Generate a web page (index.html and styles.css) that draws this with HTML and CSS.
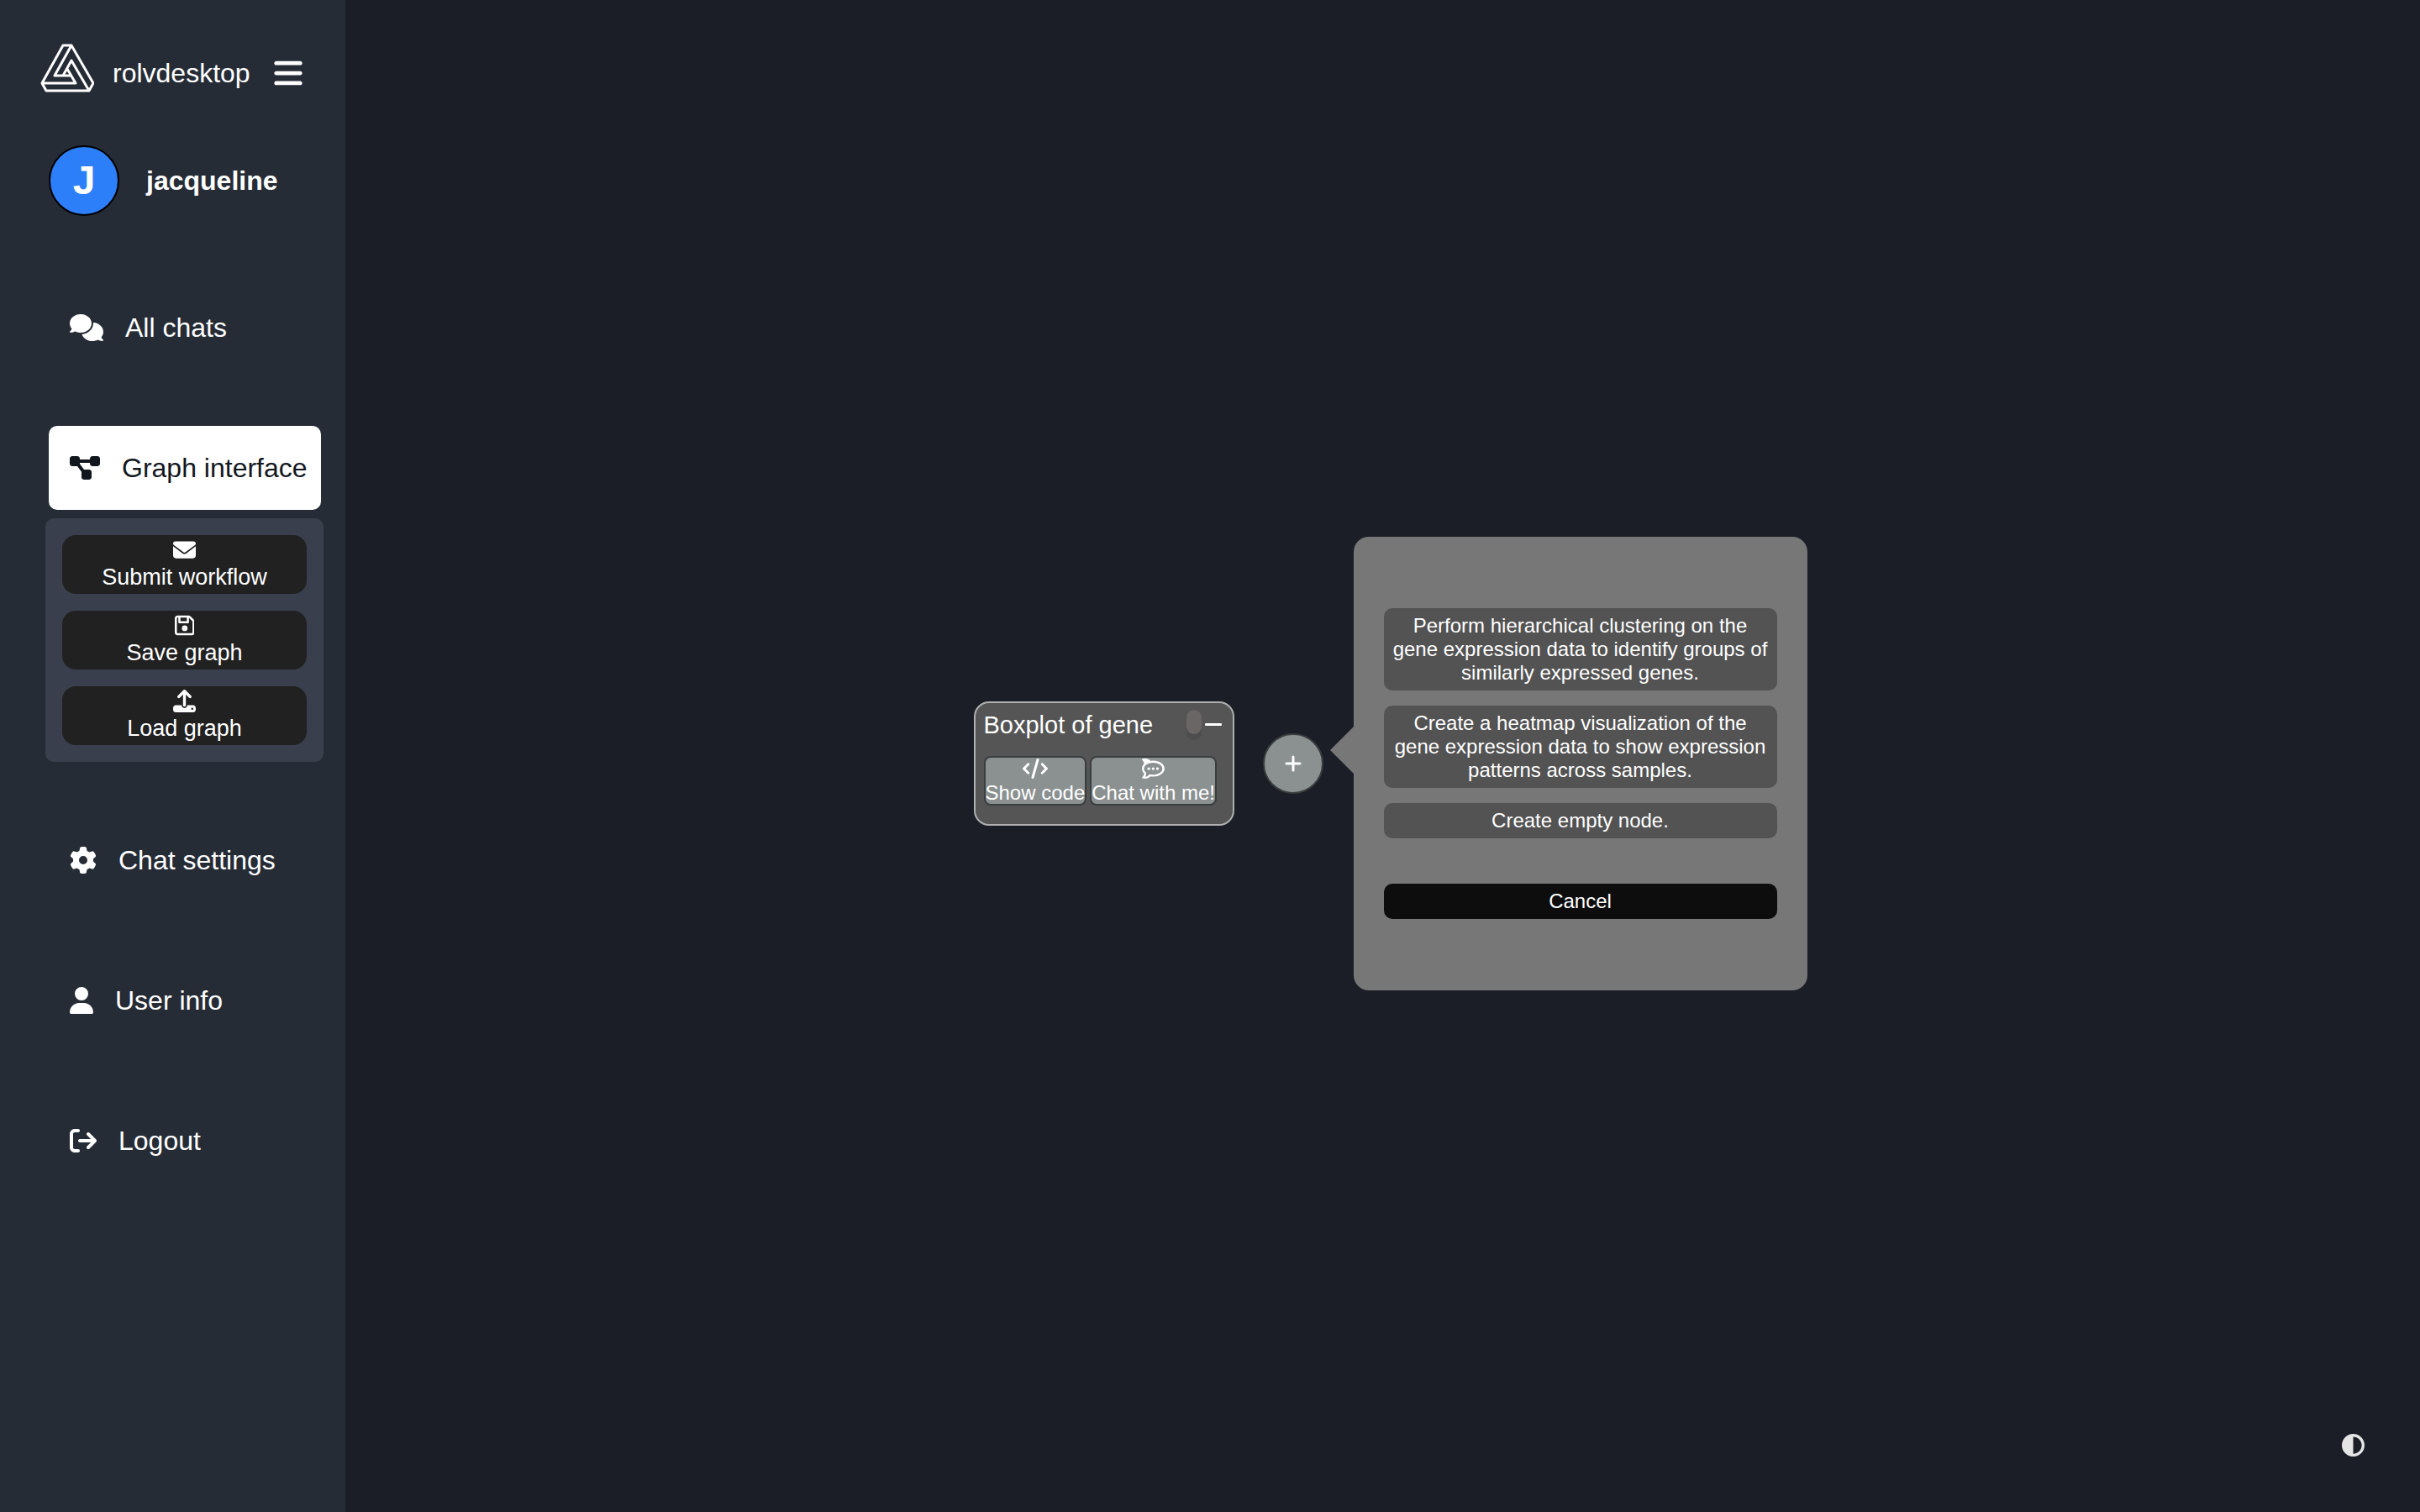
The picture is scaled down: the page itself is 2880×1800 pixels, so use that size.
FILE: index.html
```html
<!DOCTYPE html>
<html lang="en">
<head>
<meta charset="utf-8">
<title>rolvdesktop</title>
<link rel="stylesheet" href="styles.css">
</head>
<body>
<div class="app">
  <aside class="sidebar">
    <header class="brand">
      <svg class="logo" viewBox="0 0 64 58" aria-hidden="true"><path d="M27 2h10l26 45-5 9H7l-5-9zM37 2 17 38h20M2 47h40L32 30M27 38 37 20l21 36"/></svg>
      <span class="brand-name">rolvdesktop</span>
      <button class="icon-button menu-toggle" type="button" aria-label="Menu">
        <svg viewBox="0 0 448 512"><path d="M0 96C0 78.300 14.300 64 32 64H416c17.700 0 32 14.300 32 32s-14.300 32-32 32H32C14.300 128 0 113.700 0 96zM0 256c0-17.700 14.300-32 32-32H416c17.700 0 32 14.300 32 32s-14.300 32-32 32H32c-17.700 0-32-14.300-32-32zM448 416c0 17.700-14.300 32-32 32H32c-17.700 0-32-14.300-32-32s14.300-32 32-32H416c17.700 0 32 14.300 32 32z"/></svg>
      </button>
    </header>
    <div class="user">
      <span class="avatar">J</span>
      <span class="user-name">jacqueline</span>
    </div>
    <nav class="nav">
      <a class="nav-item" href="#chats">
        <svg viewBox="0 0 640 512"><path d="M208 352c114.900 0 208-78.800 208-176S322.900 0 208 0S0 78.800 0 176c0 38.600 14.700 74.300 39.600 103.400c-3.500 9.400-8.700 17.700-14.200 24.700c-4.800 6.200-9.700 11-13.300 14.300c-1.800 1.600-3.300 2.900-4.300 3.700c-.5 .4-.9 .7-1.100 .8l-.2 .2C1 327.200-1.400 334.400 .8 340.900S9.100 352 16 352c21.800 0 43.800-5.600 62.100-12.500c9.200-3.500 17.800-7.400 25.200-11.400C134.100 343.300 169.800 352 208 352zM448 176c0 112.300-99.100 196.900-216.500 207C255.800 457.400 336.400 512 432 512c38.200 0 73.900-8.700 104.700-23.900c7.500 4 16 7.900 25.200 11.400c18.300 6.900 40.300 12.500 62.100 12.500c6.900 0 13.100-4.500 15.200-11.100c2.100-6.600-.2-13.800-5.800-17.900l-.2-.2c-.2-.2-.6-.4-1.100-.8c-1-.8-2.500-2-4.300-3.700c-3.600-3.300-8.500-8.100-13.300-14.300c-5.500-7-10.700-15.400-14.200-24.700c24.900-29 39.600-64.700 39.600-103.400c0-92.800-84.900-168.900-192.600-175.500c.4 5.100 .6 10.300 .6 15.500z"/></svg>
        <span>All chats</span>
      </a>
      <div class="nav-group">
        <a class="nav-item active" href="#graph" aria-current="page">
          <svg viewBox="0 0 576 512"><path d="M0 80C0 53.500 21.500 32 48 32h96c26.500 0 48 21.500 48 48V96H384V80c0-26.500 21.500-48 48-48h96c26.500 0 48 21.500 48 48v96c0 26.500-21.500 48-48 48H432c-26.500 0-48-21.500-48-48V160H192v16c0 1.700-.1 3.400-.3 5L272 288h96c26.500 0 48 21.500 48 48v96c0 26.500-21.500 48-48 48H272c-26.500 0-48-21.500-48-48V336c0-1.700 .1-3.400 .3-5L144 224H48c-26.500 0-48-21.500-48-48V80z"/></svg>
          <span>Graph interface</span>
        </a>
        <div class="submenu">
          <button class="submenu-button" type="button">
            <svg viewBox="0 0 512 512"><path d="M48 64C21.500 64 0 85.500 0 112c0 15.100 7.100 29.300 19.200 38.400L236.800 313.600c11.400 8.500 27 8.500 38.400 0L492.800 150.400c12.100-9.100 19.200-23.300 19.200-38.400c0-26.500-21.500-48-48-48H48zM0 176V384c0 35.300 28.700 64 64 64H448c35.300 0 64-28.700 64-64V176L294.400 339.200c-22.800 17.100-54 17.100-76.800 0L0 176z"/></svg>
            <span>Submit workflow</span>
          </button>
          <button class="submenu-button" type="button">
            <svg viewBox="0 0 448 512"><path d="M48 96V416c0 8.800 7.200 16 16 16H384c8.800 0 16-7.200 16-16V170.500c0-4.200-1.700-8.300-4.700-11.300l33.900-33.900c12 12 18.700 28.300 18.700 45.300V416c0 35.300-28.700 64-64 64H64c-35.300 0-64-28.700-64-64V96C0 60.700 28.700 32 64 32H309.500c17 0 33.300 6.700 45.300 18.700l74.500 74.500-33.900 33.900L320.800 84.700c-.3-.3-.5-.5-.8-.8V184c0 13.300-10.700 24-24 24H104c-13.300 0-24-10.700-24-24V80H64c-8.800 0-16 7.200-16 16zm80-16v80H272V80H128zm32 240a64 64 0 1 1 128 0 64 64 0 1 1 -128 0z"/></svg>
            <span>Save graph</span>
          </button>
          <button class="submenu-button" type="button">
            <svg viewBox="0 0 512 512"><path d="M288 109.300V352c0 17.700-14.300 32-32 32s-32-14.300-32-32V109.300l-73.400 73.400c-12.500 12.500-32.800 12.500-45.300 0s-12.500-32.800 0-45.300l128-128c12.500-12.500 32.800-12.500 45.300 0l128 128c12.500 12.500 12.500 32.800 0 45.300s-32.800 12.500-45.300 0L288 109.300zM64 352H192c0 35.300 28.700 64 64 64s64-28.700 64-64H448c35.300 0 64 28.700 64 64v32c0 35.300-28.700 64-64 64H64c-35.300 0-64-28.700-64-64V416c0-35.300 28.700-64 64-64zM432 456a24 24 0 1 0 0-48 24 24 0 1 0 0 48z"/></svg>
            <span>Load graph</span>
          </button>
        </div>
      </div>
      <a class="nav-item" href="#settings">
        <svg viewBox="0 0 512 512"><path d="M495.900 166.600c3.200 8.700 .5 18.400-6.400 24.600l-43.300 39.400c1.100 8.300 1.700 16.800 1.700 25.400s-.6 17.100-1.700 25.400l43.300 39.400c6.900 6.200 9.600 15.900 6.400 24.600c-4.400 11.900-9.700 23.300-15.800 34.300l-4.700 8.100c-6.600 11-14 21.400-22.100 31.200c-5.900 7.200-15.700 9.600-24.500 6.800l-55.700-17.700c-13.400 10.300-28.200 18.900-44 25.400l-12.500 57.100c-2 9.100-9 16.300-18.200 17.800c-13.800 2.300-28 3.500-42.500 3.500s-28.700-1.200-42.500-3.500c-9.200-1.500-16.200-8.700-18.200-17.800l-12.500-57.100c-15.800-6.500-30.600-15.100-44-25.400L83.100 425.900c-8.800 2.800-18.600 .3-24.500-6.800c-8.100-9.800-15.500-20.200-22.100-31.200l-4.700-8.100c-6.100-11-11.400-22.400-15.800-34.300c-3.200-8.700-.5-18.400 6.400-24.600l43.300-39.400C64.600 273.100 64 264.600 64 256s.6-17.100 1.700-25.400L22.400 191.200c-6.900-6.200-9.600-15.900-6.400-24.600c4.400-11.900 9.700-23.300 15.800-34.300l4.700-8.100c6.600-11 14-21.400 22.100-31.200c5.900-7.200 15.700-9.600 24.500-6.800l55.700 17.700c13.400-10.300 28.200-18.900 44-25.400l12.500-57.100c2-9.100 9-16.300 18.200-17.800C227.300 1.200 241.500 0 256 0s28.700 1.200 42.500 3.500c9.200 1.500 16.200 8.700 18.200 17.800l12.500 57.100c15.800 6.500 30.600 15.100 44 25.400l55.700-17.700c8.800-2.800 18.600-.3 24.500 6.800c8.100 9.800 15.500 20.200 22.100 31.200l4.700 8.100c6.100 11 11.400 22.400 15.800 34.300zM256 336a80 80 0 1 0 0-160 80 80 0 1 0 0 160z"/></svg>
        <span>Chat settings</span>
      </a>
      <a class="nav-item" href="#user">
        <svg viewBox="0 0 448 512"><path d="M224 256A128 128 0 1 0 224 0a128 128 0 1 0 0 256zm-45.700 48C79.800 304 0 383.800 0 482.300C0 498.700 13.300 512 29.700 512H418.300c16.400 0 29.700-13.300 29.700-29.700C448 383.800 368.200 304 269.700 304H178.300z"/></svg>
        <span>User info</span>
      </a>
      <a class="nav-item" href="#logout">
        <svg viewBox="0 0 512 512"><path d="M502.600 278.600c12.500-12.500 12.500-32.800 0-45.300l-128-128c-12.500-12.500-32.800-12.500-45.300 0s-12.500 32.800 0 45.300L402.700 224 192 224c-17.700 0-32 14.300-32 32s14.300 32 32 32l210.700 0-73.400 73.400c-12.500 12.500-12.500 32.800 0 45.300s32.800 12.500 45.300 0l128-128zM160 96c17.700 0 32-14.300 32-32s-14.300-32-32-32L96 32C43 32 0 75 0 128L0 384c0 53 43 96 96 96l64 0c17.700 0 32-14.300 32-32s-14.300-32-32-32l-64 0c-17.700 0-32-14.300-32-32l0-256c0-17.700 14.300-32 32-32l64 0z"/></svg>
        <span>Logout</span>
      </a>
    </nav>
  </aside>

  <main class="canvas">
    <section class="node">
      <div class="node-head">
        <h2 class="node-title">Boxplot of gene</h2>
        <span class="scroll-track"><span class="scroll-thumb"></span></span>
        <button class="icon-button collapse" type="button" aria-label="Collapse">
          <svg viewBox="0 0 20 4"><rect width="20" height="3" rx="1"/></svg>
        </button>
      </div>
      <div class="node-actions">
        <button class="node-button" type="button">
          <svg viewBox="0 0 640 512"><path d="M392.800 1.200c-17-4.900-34.700 5-39.600 22l-128 448c-4.900 17 5 34.700 22 39.600s34.700-5 39.600-22l128-448c4.900-17-5-34.700-22-39.600zm80.600 120.100c-12.500 12.500-12.500 32.800 0 45.300L562.700 256l-89.400 89.400c-12.500 12.500-12.500 32.800 0 45.300s32.800 12.500 45.300 0l112-112c12.500-12.500 12.500-32.800 0-45.300l-112-112c-12.500-12.500-32.800-12.500-45.300 0zm-306.700 0c-12.500-12.500-32.800-12.500-45.300 0l-112 112c-12.500 12.500-12.500 32.800 0 45.300l112 112c12.500 12.500 32.800 12.500 45.300 0s12.500-32.800 0-45.300L77.300 256l89.400-89.400c12.500-12.500 12.500-32.800 0-45.300z"/></svg>
          <span>Show code</span>
        </button>
        <button class="node-button" type="button">
          <svg viewBox="0 0 576 512"><path fill-rule="evenodd" d="M284 224.800a34.100 34.100 0 1 0 .1 0zm-110.500 0a34.100 34.100 0 1 0 .1 0zm220.900 0a34.100 34.100 0 1 0 .1 0zM548.300 169.500c-15.500-24.200-37.300-45.600-64.700-63.600-52.900-34.800-122.400-54-195.700-54a406 406 0 0 0 -72 6.400 238.500 238.500 0 0 0 -49.500-36.600C99.700-11.700 40.900 .7 11.100 11.400A14.300 14.300 0 0 0 5.600 34.800C26.500 56.500 61.200 99.300 52.700 138.300c-33.100 33.900-51.100 74.800-51.100 117.300 0 43.400 18 84.200 51.100 118.100 8.500 39-26.200 81.800-47.100 103.500a14.300 14.300 0 0 0 5.600 23.300c29.700 10.700 88.500 23.100 155.300-10.200a238.700 238.700 0 0 0 49.500-36.600A406 406 0 0 0 288 460.100c73.300 0 142.800-19.200 195.700-54 27.400-18 49.100-39.400 64.700-63.600 17.300-26.900 26.100-55.900 26.100-86.100C574.400 225.400 565.600 196.400 548.300 169.500zM285 409.900a345.700 345.700 0 0 1 -89.400-11.500l-20.100 19.400a184.400 184.400 0 0 1 -37.100 27.600 145.800 145.800 0 0 1 -52.500 14.900c1-1.800 1.900-3.600 2.800-5.400q30.300-55.700 16.300-100.100c-33-26-52.800-59.200-52.800-95.400 0-83.100 104.300-150.500 232.800-150.500s232.900 67.400 232.900 150.500C517.900 342.500 413.600 409.900 285 409.900z"/></svg>
          <span>Chat with me!</span>
        </button>
      </div>
    </section>
    <button class="add-node" type="button" aria-label="Add node">
      <svg viewBox="0 0 20 20"><path d="M10 2v16M2 10h16"/></svg>
    </button>
    <section class="suggestions">
      <button class="suggestion" type="button">Perform hierarchical clustering on the gene expression data to identify groups of similarly expressed genes.</button>
      <button class="suggestion" type="button">Create a heatmap visualization of the gene expression data to show expression patterns across samples.</button>
      <button class="suggestion" type="button">Create empty node.</button>
      <button class="suggestion cancel" type="button">Cancel</button>
    </section>
  </main>
</div>
<button class="icon-button theme-toggle" type="button" aria-label="Toggle theme">
  <svg viewBox="0 0 512 512"><path d="M448 256c0-106-86-192-192-192V448c106 0 192-86 192-192zM0 256a256 256 0 1 1 512 0A256 256 0 1 1 0 256z"/></svg>
</button>
</body>
</html>
```
FILE: styles.css
```css
* {
  box-sizing: border-box;
}

body {
  margin: 0;
  background: #1b1e26;
  color: #fff;
  font-family: "Liberation Sans", Arial, Helvetica, sans-serif;
  font-size: 32px;
  line-height: 36px;
}

button {
  margin: 0;
  padding: 0;
  border: 0;
  color: inherit;
  font: inherit;
  cursor: pointer;
}

svg {
  display: block;
  flex: none;
  fill: currentColor;
}

.app {
  display: flex;
  min-height: 100vh;
}

.sidebar {
  flex: none;
  width: 411px;
  padding: 52px 26px 52px 48px;
  background: #262c36;
}

.icon-button {
  background: none;
}

.brand {
  display: flex;
  align-items: center;
}

.logo {
  width: 64px;
  height: 58px;
  margin-right: 22px;
  fill: none;
  stroke: #fff;
  stroke-width: 3;
  stroke-linejoin: round;
}

.brand-name,
.menu-toggle {
  padding-top: 12px;
}

.menu-toggle {
  margin-left: 28px;
}

.menu-toggle svg {
  width: 34px;
  height: 38px;
}

.user {
  display: flex;
  align-items: center;
  gap: 32px;
  margin: 63px 0 0 10px;
  font-weight: bold;
}

.avatar {
  display: flex;
  align-items: center;
  justify-content: center;
  width: 84px;
  height: 84px;
  border: 2px solid #000;
  border-radius: 50%;
  background: #2d7ff9;
  font-size: 48px;
}

.nav {
  display: flex;
  flex-direction: column;
  gap: 67px;
  margin-top: 83px;
}

.nav-item {
  display: flex;
  align-items: center;
  gap: 26px;
  height: 100px;
  margin: 0 3px 0 10px;
  padding-left: 25px;
  border-radius: 10px;
  color: #fff;
  text-decoration: none;
  white-space: nowrap;
}

.nav-item.active {
  background: #fff;
  color: #12171e;
}

.nav-item svg {
  height: 32px;
}

.submenu {
  display: flex;
  flex-direction: column;
  gap: 20px;
  margin: 10px 0 0 6px;
  padding: 20px;
  border-radius: 10px;
  background: #393f4d;
}

.submenu-button {
  display: flex;
  flex-direction: column;
  align-items: center;
  justify-content: center;
  gap: 3px;
  height: 70px;
  border-radius: 16px;
  background: #212121;
  font-size: 27px;
  line-height: 32px;
}

.submenu-button svg {
  height: 27px;
}

.canvas {
  display: flex;
  flex: 1;
  align-items: center;
  justify-content: center;
  padding: 18px 0 0 18px;
}

.node {
  width: 310px;
  height: 148px;
  padding: 7px 10px;
  border: 2px solid #b0b0b0;
  border-radius: 18px;
  background: #555;
}

.node-head {
  display: flex;
  align-items: center;
}

.node-title {
  flex: 1;
  margin: 0;
  font-size: 29px;
  font-weight: normal;
  line-height: 38px;
}

.scroll-track {
  width: 18px;
  height: 36px;
  border-radius: 9px;
  background: #4d4d4d;
}

.scroll-thumb {
  display: block;
  height: 29px;
  border-radius: 9px;
  background: #6a6666;
}

.collapse {
  margin: 0 3px 0 4px;
}

.collapse svg {
  width: 20px;
  height: 4px;
}

.node-actions {
  display: flex;
  gap: 4px;
  margin-top: 18px;
}

.node-button {
  display: flex;
  flex-direction: column;
  align-items: center;
  height: 59px;
  border: 2px solid #3a3e3e;
  border-radius: 8px;
  background: #8b9191;
  font-size: 24px;
  line-height: 28px;
  white-space: nowrap;
}

.node-button svg {
  height: 24px;
  margin: 1px 0 3px;
}

.add-node {
  display: flex;
  align-items: center;
  justify-content: center;
  width: 72px;
  height: 72px;
  margin: 0 36px 0 34px;
  border: 2px solid #3a3e3e;
  border-radius: 50%;
  background: #8b9191;
}

.add-node svg {
  width: 20px;
  height: 20px;
  fill: none;
  stroke: #fff;
  stroke-width: 3;
  stroke-linecap: round;
}

.suggestions {
  position: relative;
  display: flex;
  flex-direction: column;
  justify-content: center;
  gap: 18px;
  width: 540px;
  min-height: 540px;
  padding: 36px;
  border-radius: 18px;
  background: #777;
}

/* Pointer towards the add button */
.suggestions::before {
  content: "";
  position: absolute;
  top: 226px;
  right: 100%;
  border: 28px solid transparent;
  border-left: 0;
  border-right-color: #777;
}

.suggestion {
  padding: 7px;
  border-radius: 10px;
  background: #535353;
  font-size: 24px;
  line-height: 28px;
}

.cancel {
  margin-top: 36px;
  background: #0d0d0d;
}

.theme-toggle {
  position: fixed;
  right: 66px;
  bottom: 66px;
  color: #e5e5e5;
}

.theme-toggle svg {
  width: 27px;
  height: 27px;
}
```
